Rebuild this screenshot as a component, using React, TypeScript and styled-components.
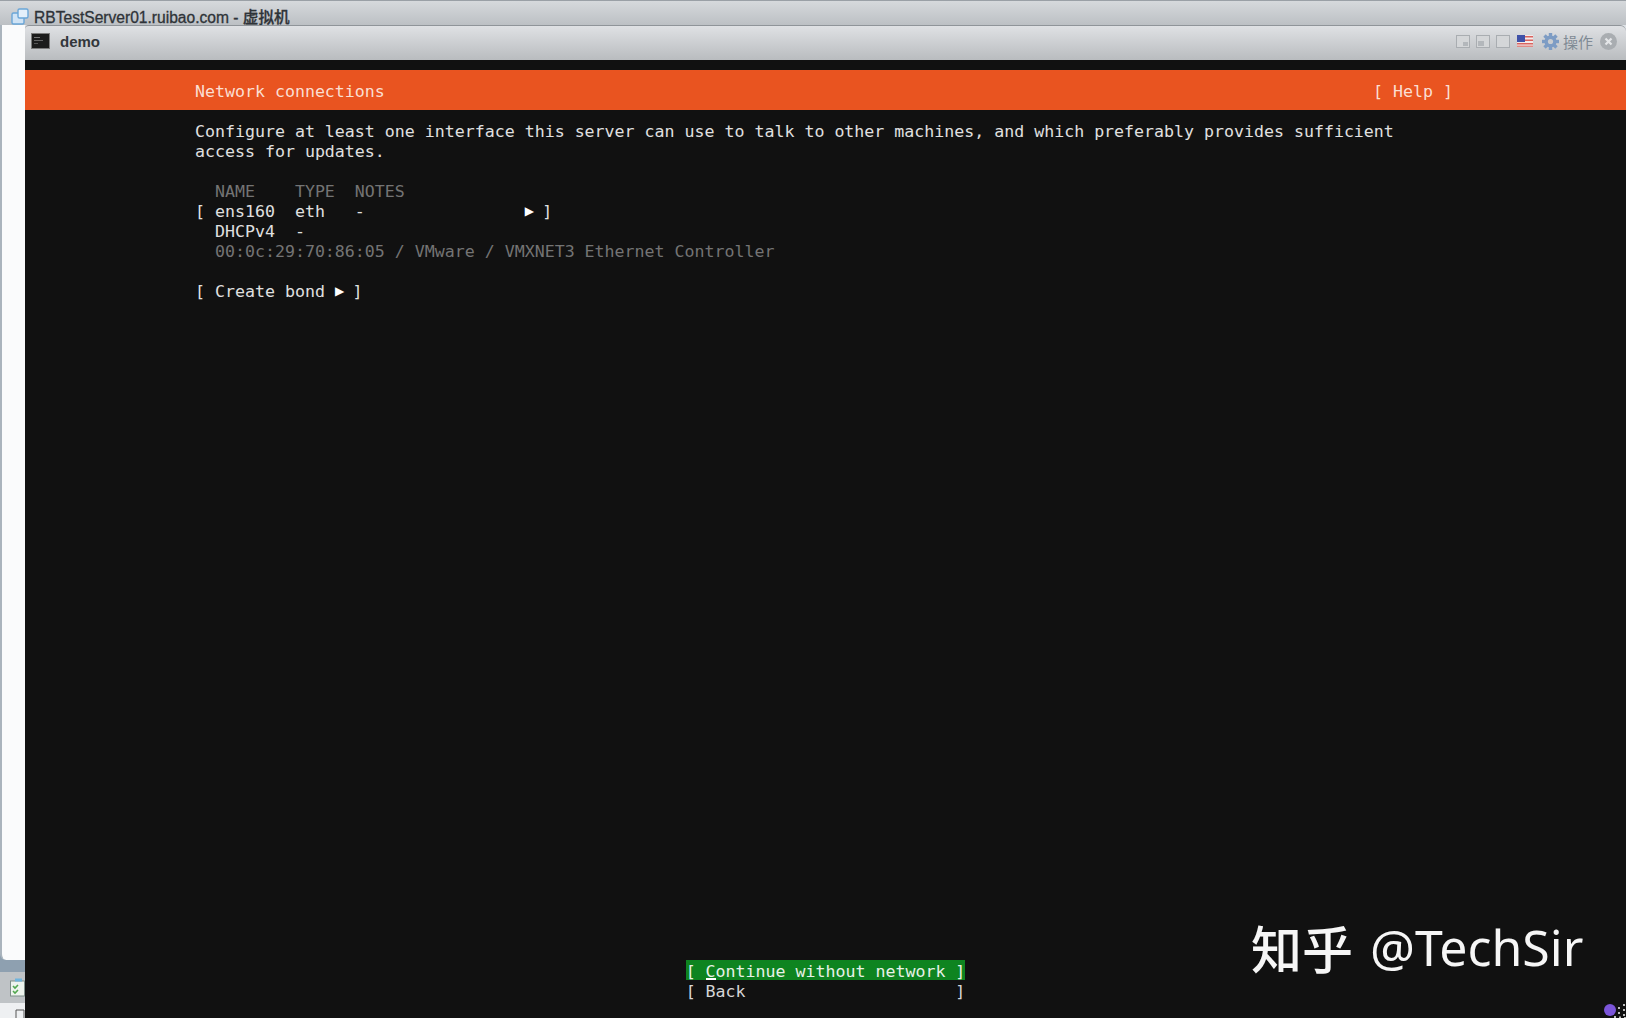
import React from "react";
import styled, { createGlobalStyle } from "styled-components";

const GlobalStyle = createGlobalStyle`
  html, body {
    margin: 0;
    padding: 0;
    background: #111;
    overflow: hidden;
  }
`;

const Page = styled.div`
  position: relative;
  width: 1626px;
  height: 1018px;
  display: flex;
  flex-direction: column;
  overflow: hidden;
  background: #dfe3e7;
  font-family: "Liberation Sans", "Noto Sans CJK SC", sans-serif;
`;

const OuterTitle = styled.div`
  height: 25px;
  flex: none;
  display: flex;
  align-items: center;
  gap: 4px;
  padding: 5px 0 0 10px;
  box-sizing: border-box;
  background: linear-gradient(#d6d9dc, #bcc0c4);
  border-top: 1px solid #9aa0a6;
  color: #2e3338;
  font-size: 15.6px;
  font-weight: 500;
  -webkit-text-stroke: 0.3px #2e3338;
`;

const Main = styled.div`
  flex: 1;
  display: flex;
  min-height: 0;
`;

const Side = styled.div`
  width: 25px;
  flex: none;
  display: flex;
  flex-direction: column;
  background: #8ea0b0;
`;

const SidePanel = styled.div`
  flex: 1;
  background: #fafbfc;
  border-left: 2px solid #aab4bd;
  border-bottom-left-radius: 6px;
  margin-bottom: 12px;
`;

const SideTab = styled.div`
  height: 31px;
  flex: none;
  display: flex;
  align-items: center;
  justify-content: flex-end;
  background: #bfc3c6;
`;

const SideFoot = styled.div`
  height: 15px;
  flex: none;
  background: #eef0f2;
  display: flex;
  justify-content: flex-end;
  align-items: flex-end;
`;

const Console = styled.div`
  flex: 1;
  min-width: 0;
  display: flex;
  flex-direction: column;
`;

const ConsoleBar = styled.div`
  height: 35px;
  flex: none;
  display: flex;
  align-items: center;
  padding: 0 9px 4px 6px;
  box-sizing: border-box;
  background: linear-gradient(#dfe1e4, #b9bcbf);
  border-top-left-radius: 4px;
  border-top-right-radius: 6px;
  border-top: 1px solid #8f9499;
`;

const ConsoleName = styled.div`
  margin-left: 10px;
  font-size: 15px;
  font-weight: 700;
  color: #33373b;
`;

const BarTools = styled.div`
  margin-left: auto;
  display: flex;
  align-items: center;
  gap: 7px;
`;

const WinGroup = styled.div`
  display: flex;
  gap: 6px;
`;

const GearSlot = styled.span`
  display: flex;
  margin: 0 -3px 0 2px;
`;

const ActionLabel = styled.span`
  font-size: 15px;
  color: #7f8a94;
`;

const Terminal = styled.div`
  flex: 1;
  display: flex;
  flex-direction: column;
  background: #111;
  padding: 10px 0 18px;
  box-sizing: border-box;
  font-family: "DejaVu Sans Mono", monospace;
  font-size: 16.6px;
  line-height: 23px;
  color: #e0e0e0;
  white-space: pre;
`;

const HeaderBand = styled.div`
  height: 40px;
  flex: none;
  display: flex;
  align-items: center;
  justify-content: space-between;
  padding: 3px 173px 0 170px;
  box-sizing: border-box;
  background: #e95420;
  color: #fbdfd2;
`;

const Content = styled.div`
  padding: 10px 0 0 170px;
`;

const Row = styled.div<{ $dim?: boolean; $gap?: boolean }>`
  height: 20px;
  margin-bottom: ${(p) => (p.$gap ? "20px" : "0")};
  color: ${(p) => (p.$dim ? "#747474" : "#e0e0e0")};
`;

const Arrow = styled.span`
  display: inline-block;
  width: 1ch;
  font-family: "DejaVu Sans", sans-serif;
  font-size: 12px;
  line-height: 0;
  vertical-align: 2px;
  text-align: center;
  color: #fff;
`;

const Footer = styled.div`
  margin-top: auto;
  align-self: center;
  display: flex;
  flex-direction: column;
`;

const MenuItem = styled.div<{ $active?: boolean }>`
  position: relative;
  height: 20px;
  color: ${(p) => (p.$active ? "#e8f2e8" : "#d6d6d6")};
  background: ${(p) => (p.$active ? "#0e8420" : "transparent")};
`;

const Cursor = styled.span`
  position: absolute;
  left: 20px;
  bottom: 0;
  width: 10px;
  height: 2px;
  background: #fff;
`;

const Watermark = styled.div`
  position: absolute;
  left: 1251px;
  top: 913px;
  display: flex;
  align-items: center;
  gap: 17px;
  font-family: "Noto Sans", "Noto Sans CJK SC", sans-serif;
  font-size: 50px;
  line-height: 68px;
  color: #f6f6f6;
  white-space: pre;
`;

const WatermarkCjk = styled.span`
  font-family: "Noto Sans CJK SC", sans-serif;
  font-size: 51px;
  font-weight: 500;
`;

const Dots = styled.svg`
  position: absolute;
  right: 0;
  bottom: 0;
`;

const StackIcon = () => (
  <svg width="20" height="20" viewBox="0 0 20 20">
    <rect x="2" y="7" width="12" height="11" rx="1.5" fill="#cfe3f5" stroke="#6aa6d8" strokeWidth="1.4" />
    <rect x="8" y="3" width="10" height="9" rx="1.5" fill="#e4f0fa" stroke="#6aa6d8" strokeWidth="1.4" />
  </svg>
);

const ScreenIcon = () => (
  <svg width="19" height="16" viewBox="0 0 19 16">
    <rect x="0.5" y="0.5" width="18" height="15" fill="#1c1c1c" stroke="#7b7b7b" />
    <rect x="3" y="4" width="6" height="1" fill="#777" />
    <rect x="3" y="7" width="9" height="1" fill="#666" />
    <rect x="3" y="10" width="4" height="1" fill="#555" />
  </svg>
);

const WinIcon = ({ kind }: { kind: "min" | "mid" | "max" }) => (
  <svg width="14" height="13" viewBox="0 0 14 13">
    <rect x="0.5" y="0.5" width="13" height="12" fill="#d4d6d8" stroke="#a9adb1" />
    {kind === "min" && <rect x="7" y="7" width="5" height="4" fill="#b3b7bb" />}
    {kind === "mid" && <rect x="2" y="6" width="6" height="5" fill="#b3b7bb" />}
  </svg>
);

const FlagIcon = () => (
  <svg width="16" height="12" viewBox="0 0 16 12">
    <rect width="16" height="12" fill="#f3eaea" />
    <rect y="1" width="16" height="1.5" fill="#d9635f" />
    <rect y="4.5" width="16" height="1.5" fill="#d9635f" />
    <rect y="8" width="16" height="1.5" fill="#d9635f" />
    <rect y="10.5" width="16" height="1.5" fill="#e08a86" />
    <rect width="8" height="7" fill="#3f51a8" />
  </svg>
);

const GearIcon = () => (
  <svg width="17" height="17" viewBox="0 0 17 17">
    <g fill="#7d9cc4">
      <circle cx="8.5" cy="8.5" r="6" />
      {[0, 45, 90, 135, 180, 225, 270, 315].map((a) => (
        <rect key={a} x="6.8" y="0" width="3.4" height="4" transform={`rotate(${a} 8.5 8.5)`} />
      ))}
    </g>
    <circle cx="8.5" cy="8.5" r="2.6" fill="#c9ccd0" />
  </svg>
);

const CloseIcon = () => (
  <svg width="17" height="17" viewBox="0 0 17 17">
    <circle cx="8.5" cy="8.5" r="8.5" fill="#a9adb1" />
    <path d="M5.5 5.5l6 6M11.5 5.5l-6 6" stroke="#e4e6e8" strokeWidth="2.2" />
  </svg>
);

const TaskIcon = () => (
  <svg width="15" height="19" viewBox="0 0 15 19">
    <rect x="0.5" y="3" width="14" height="15" fill="#eef4ee" stroke="#7f8f8a" />
    <rect x="5" y="0.5" width="7" height="3" fill="#6fb4dd" />
    <path d="M3 8l2 2 3-3M3 13l2 2 3-3" fill="none" stroke="#52a84f" strokeWidth="1.6" />
  </svg>
);

const App: React.FC = () => {
  return (
    <Page>
      <GlobalStyle />
      <OuterTitle>
        <StackIcon />
        RBTestServer01.ruibao.com - 虚拟机
      </OuterTitle>
      <Main>
        <Side>
          <SidePanel />
          <SideTab>
            <TaskIcon />
          </SideTab>
          <SideFoot>
            <svg width="10" height="10" viewBox="0 0 10 10">
              <path d="M1 10V2h8v8" fill="none" stroke="#555" />
            </svg>
          </SideFoot>
        </Side>
        <Console>
          <ConsoleBar>
            <ScreenIcon />
            <ConsoleName>demo</ConsoleName>
            <BarTools>
              <WinGroup>
                <WinIcon kind="min" />
                <WinIcon kind="mid" />
                <WinIcon kind="max" />
              </WinGroup>
              <FlagIcon />
              <GearSlot>
                <GearIcon />
              </GearSlot>
              <ActionLabel>操作</ActionLabel>
              <CloseIcon />
            </BarTools>
          </ConsoleBar>
          <Terminal>
            <HeaderBand>
              <span>Network connections</span>
              <span>[ Help ]</span>
            </HeaderBand>
            <Content>
              <Row>Configure at least one interface this server can use to talk to other machines, and which preferably provides sufficient</Row>
              <Row $gap>access for updates.</Row>
              <Row $dim>{"  NAME    TYPE  NOTES"}</Row>
              <Row>
                {"[ ens160  eth   -                "}
                <Arrow>▶</Arrow>
                {" ]"}
              </Row>
              <Row>{"  DHCPv4  -"}</Row>
              <Row $dim $gap>{"  00:0c:29:70:86:05 / VMware / VMXNET3 Ethernet Controller"}</Row>
              <Row>
                {"[ Create bond "}
                <Arrow>▶</Arrow>
                {" ]"}
              </Row>
            </Content>
            <Footer>
              <MenuItem $active>
                {"[ Continue without network ]"}
                <Cursor />
              </MenuItem>
              <MenuItem>{"[ Back                     ]"}</MenuItem>
            </Footer>
          </Terminal>
        </Console>
      </Main>
      <Watermark>
        <WatermarkCjk>知乎</WatermarkCjk>
        <span>@TechSir</span>
      </Watermark>
      <Dots width="24" height="16" viewBox="0 0 24 16">
        <circle cx="8" cy="8" r="6" fill="#7b55d9" />
        {[[16, 5], [21, 2], [21, 7], [16, 10], [21, 12], [12, 14], [17, 14.5], [22, 15]].map(([x, y]) => (
          <rect key={`${x}-${y}`} x={x} y={y} width="2" height="2" fill="#bdbdbd" />
        ))}
      </Dots>
    </Page>
  );
};

export default App;
